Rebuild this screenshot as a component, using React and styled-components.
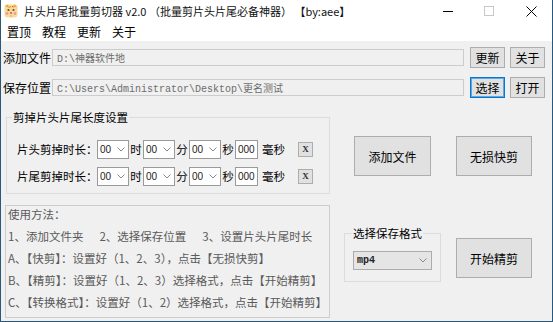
import React from "react";
import styled, { createGlobalStyle } from "styled-components";

const UI = `"Noto Sans CJK SC", "Microsoft YaHei", sans-serif`;
const MONO = `"Liberation Mono", "Noto Sans CJK SC", monospace`;

const Global = createGlobalStyle`
  html, body { margin: 0; padding: 0; background: #f0f0f0; overflow: hidden; }
  * { box-sizing: border-box; }
`;

const Window = styled.div`
  width: 553px;
  height: 322px;
  display: flex;
  flex-direction: column;
  border: 1px solid #2b587a;
  border-top: 0;
  background: #f0f0f0;
  font-family: ${UI};
  color: #000;
  overflow: hidden;
`;

const TitleBar = styled.div`
  height: 22px;
  flex-shrink: 0;
  background: #fff;
  display: flex;
  align-items: center;
`;

const IconWrap = styled.div`
  margin-left: 3px;
  width: 14px;
  height: 14px;
  display: flex;
`;

const TitleText = styled.div`
  flex: 1;
  margin-left: 6px;
  font-size: 11px;
  line-height: 22px;
  white-space: pre;
  color: #111;
`;

const Controls = styled.div`
  display: flex;
  height: 22px;
`;

const Ctrl = styled.div`
  width: ${(p) => p.$w}px;
  display: flex;
  align-items: center;
  justify-content: center;
`;

const MenuBar = styled.div`
  height: 19px;
  flex-shrink: 0;
  background: #fff;
  display: flex;
  align-items: center;
  gap: 11px;
  padding-left: 6px;
  font-size: 12px;
`;

const MenuItem = styled.span`
  line-height: 19px;
`;

const Body = styled.div`
  flex: 1;
  display: flex;
  flex-direction: column;
  padding-top: 6px;
`;

const PathRow = styled.div`
  display: flex;
  align-items: center;
  height: 21px;
  padding-left: 2px;
  margin-top: ${(p) => p.$mt || 0}px;
`;

const FieldLabel = styled.span`
  width: 49px;
  font-size: 12px;
  white-space: nowrap;
`;

const PathInput = styled.input`
  width: 412px;
  height: 17px;
  margin: 0;
  border: 1px solid #cccccc;
  background: #f0f0f0;
  font-family: ${MONO};
  font-size: 10px;
  color: #6d6d6d;
  padding: 0 4px;
  outline: none;
`;

const Btn = styled.button`
  width: ${(p) => p.$w}px;
  height: ${(p) => p.$h}px;
  margin: 0;
  margin-left: ${(p) => p.$ml || 0}px;
  padding: 0;
  background: #e1e1e1;
  border: 1px solid ${(p) => (p.$focused ? "#0078d7" : "#adadad")};
  box-shadow: ${(p) => (p.$focused ? "inset 0 0 0 1px rgba(0,120,215,0.55)" : "none")};
  font-family: ${UI};
  font-size: 12px;
  color: #000;
  white-space: nowrap;
`;

const Main = styled.div`
  display: grid;
  grid-template-columns: 330px 1fr;
`;

const LeftCol = styled.div`
  display: flex;
  flex-direction: column;
  padding-left: 4px;
`;

const Group = styled.fieldset`
  margin: ${(p) => p.$mt || 0}px 0 0 ${(p) => p.$ml || 0}px;
  width: ${(p) => p.$w}px;
  min-width: 0;
  border: 1px solid #dcdcdc;
  padding: ${(p) => p.$pad};
`;

const Legend = styled.legend`
  font-size: 11.5px;
  line-height: 16px;
  padding: 0 1px;
  margin-left: ${(p) => p.$ml}px;
  white-space: nowrap;
`;

const TimeRow = styled.div`
  display: flex;
  align-items: center;
  height: 20px;
  & + & {
    margin-top: 7px;
  }
`;

const TimeLabel = styled.span`
  width: 80px;
  font-size: 11.5px;
  white-space: nowrap;
`;

const Combo = styled.div`
  width: 32px;
  height: 19px;
  background: #fff;
  border: 1px solid #9a9a9a;
  display: flex;
  align-items: center;
  justify-content: space-between;
  padding: 0 3px 0 2px;
  font-family: "Liberation Sans", sans-serif;
  font-size: 10px;
  color: #222;
`;

const Unit = styled.span`
  width: 14px;
  text-align: center;
  font-size: 11.5px;
`;

const MsBox = styled.div`
  width: 23px;
  height: 19px;
  background: #fff;
  border: 1px solid #9a9a9a;
  padding-left: 2px;
  font-family: "Liberation Sans", sans-serif;
  font-size: 10px;
  line-height: 17px;
  color: #222;
`;

const MsUnit = styled.span`
  margin-left: 4px;
  font-size: 11.5px;
`;

const ClearBtn = styled.div`
  margin-left: 13px;
  width: 15px;
  height: 15px;
  background: #e1e1e1;
  border: 1px solid #adadad;
  display: flex;
  align-items: center;
  justify-content: center;
  font-family: "Liberation Serif", serif;
  font-size: 9px;
  font-weight: bold;
  color: #333;
`;

const Usage = styled.div`
  margin-top: 11px;
  width: 325px;
  height: 113px;
  border: 1px solid #cdcdcd;
  color: #5a5a5a;
  font-size: 11.5px;
`;

const UsageLine = styled.div`
  height: 22px;
  line-height: 16px;
  padding-left: 2px;
  white-space: nowrap;
  display: flex;
  gap: ${(p) => p.$gap || 0}px;
`;

const RightCol = styled.div`
  display: grid;
  grid-template-columns: 97px 76px;
  column-gap: 15px;
  padding-left: 13px;
  align-content: start;
`;

const CellBtn = styled(Btn)`
  justify-self: center;
  align-self: ${(p) => p.$align || "start"};
  margin-top: ${(p) => p.$mt || 0}px;
  margin-bottom: ${(p) => p.$mb || 0}px;
`;

const Select = styled.div`
  width: 79px;
  height: 19px;
  background: #e5e5e5;
  border: 1px solid #acacac;
  display: flex;
  align-items: center;
  justify-content: space-between;
  padding: 0 4px 0 3px;
  font-family: ${MONO};
  font-size: 10px;
  font-weight: bold;
  color: #222;
`;

const Chevron = ({ color = "#8a8a8a" }) => (
  <svg width="8" height="5" viewBox="0 0 8 5">
    <polyline points="0.5,0.5 4,4 7.5,0.5" fill="none" stroke={color} strokeWidth="1" />
  </svg>
);

const AppIcon = () => (
  <svg width="14" height="14" viewBox="0 0 14 14">
    <rect x="0.5" y="0.5" width="13" height="13" rx="3" fill="#f4dc9c" />
    <path d="M1 2 L4 0.5 L5 4 Z" fill="#e9a43a" />
    <path d="M13 2 L10 0.5 L9 4 Z" fill="#e9a43a" />
    <circle cx="4.5" cy="6" r="1.1" fill="#7a4b26" />
    <circle cx="9.5" cy="6" r="1.1" fill="#7a4b26" />
    <circle cx="3" cy="9.5" r="1.4" fill="#f19a9a" />
    <circle cx="11" cy="9.5" r="1.4" fill="#f19a9a" />
    <circle cx="7" cy="9" r="0.9" fill="#d9453a" />
    <circle cx="6" cy="3" r="0.8" fill="#e07a2c" />
    <circle cx="8.5" cy="2.6" r="0.7" fill="#d9453a" />
    <circle cx="7" cy="12" r="0.8" fill="#e9a43a" />
  </svg>
);

const TimeControls = ({ label }) => (
  <TimeRow>
    <TimeLabel>{label}</TimeLabel>
    <Combo>
      00
      <Chevron />
    </Combo>
    <Unit>时</Unit>
    <Combo>
      00
      <Chevron />
    </Combo>
    <Unit>分</Unit>
    <Combo>
      00
      <Chevron />
    </Combo>
    <Unit>秒</Unit>
    <MsBox>000</MsBox>
    <MsUnit>毫秒</MsUnit>
    <ClearBtn>X</ClearBtn>
  </TimeRow>
);

export default function App() {
  return (
    <>
      <Global />
      <Window>
        <TitleBar>
          <IconWrap>
            <AppIcon />
          </IconWrap>
          <TitleText>片头片尾批量剪切器 v2.0 （批量剪片头片尾必备神器） 【by:aee】</TitleText>
          <Controls>
            <Ctrl $w={40}>
              <svg width="10" height="10" viewBox="0 0 10 10">
                <line x1="0" y1="5.5" x2="10" y2="5.5" stroke="#000" strokeWidth="1" />
              </svg>
            </Ctrl>
            <Ctrl $w={42}>
              <svg width="10" height="10" viewBox="0 0 10 10">
                <rect x="0.5" y="0.5" width="9" height="9" fill="none" stroke="#c8c8c8" strokeWidth="1" />
              </svg>
            </Ctrl>
            <Ctrl $w={42}>
              <svg width="11" height="11" viewBox="0 0 11 11">
                <path d="M0.5 0.5 L10.5 10.5 M10.5 0.5 L0.5 10.5" stroke="#000" strokeWidth="1" />
              </svg>
            </Ctrl>
          </Controls>
        </TitleBar>
        <MenuBar>
          <MenuItem>置顶</MenuItem>
          <MenuItem>教程</MenuItem>
          <MenuItem>更新</MenuItem>
          <MenuItem>关于</MenuItem>
        </MenuBar>
        <Body>
          <PathRow>
            <FieldLabel>添加文件</FieldLabel>
            <PathInput readOnly value="D:\神器软件地" />
            <Btn $w={35} $h={21} $ml={6}>更新</Btn>
            <Btn $w={35} $h={21} $ml={5}>关于</Btn>
          </PathRow>
          <PathRow $mt={9}>
            <FieldLabel>保存位置</FieldLabel>
            <PathInput readOnly value="C:\Users\Administrator\Desktop\更名测试" />
            <Btn $w={35} $h={21} $ml={6} $focused>选择</Btn>
            <Btn $w={35} $h={21} $ml={5}>打开</Btn>
          </PathRow>
          <Main>
            <LeftCol>
              <Group $mt={11} $ml={1} $w={324} $pad="14px 10px 7px">
                <Legend $ml={-5}>剪掉片头片尾长度设置</Legend>
                <TimeControls label="片头剪掉时长：" />
                <TimeControls label="片尾剪掉时长：" />
              </Group>
              <Usage>
                <UsageLine>使用方法：</UsageLine>
                <UsageLine $gap={16}>
                  <span>1、添加文件夹</span>
                  <span>2、选择保存位置</span>
                  <span>3、设置片头片尾时长</span>
                </UsageLine>
                <UsageLine>A、【快剪】：设置好（1、2、3），点击【无损快剪】</UsageLine>
                <UsageLine>B、【精剪】：设置好（1、2、3）选择格式，点击【开始精剪】</UsageLine>
                <UsageLine>C、【转换格式】：设置好（1、2）选择格式，点击【开始精剪】</UsageLine>
              </Usage>
            </LeftCol>
            <RightCol>
              <CellBtn $w={77} $h={40} $mt={38}>添加文件</CellBtn>
              <CellBtn $w={76} $h={40} $mt={38}>无损快剪</CellBtn>
              <Group $mt={49} $w={97} $pad="10px 8px 11px">
                <Legend $ml={-1}>选择保存格式</Legend>
                <Select>
                  mp4
                  <Chevron />
                </Select>
              </Group>
              <CellBtn $w={76} $h={40} $align="end" $mb={4}>开始精剪</CellBtn>
            </RightCol>
          </Main>
        </Body>
      </Window>
    </>
  );
}
